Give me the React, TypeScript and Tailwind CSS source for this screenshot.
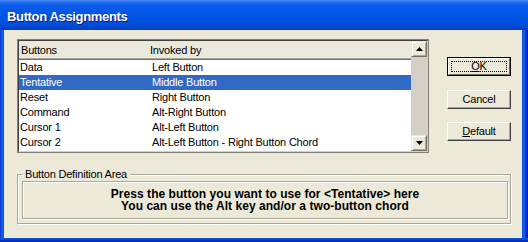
const rows = [
  ["Data", "Left Button"],
  ["Tentative", "Middle Button"],
  ["Reset", "Right Button"],
  ["Command", "Alt-Right Button"],
  ["Cursor 1", "Alt-Left Button"],
  ["Cursor 2", "Alt-Left Button - Right Button Chord"],
];

function Arrow({ up }: { up?: boolean }) {
  return (
    <svg width="7" height="4" viewBox="0 0 7 4">
      {up ? <polygon points="3.5,0 7,4 0,4" fill="#000" /> : <polygon points="0,0 7,0 3.5,4" fill="#000" />}
    </svg>
  );
}

function ScrollButton({ up }: { up?: boolean }) {
  return (
    <div className="flex h-[16px] items-center justify-center border border-t-[#ece9d8] border-l-[#ece9d8] border-r-[#716f64] border-b-[#716f64] bg-[#ece9d8] shadow-[inset_1px_1px_0_#fff,inset_-1px_-1px_0_#aca899]">
      <Arrow up={up} />
    </div>
  );
}

function DlgButton({
  children,
  isDefault,
  className = "",
}: {
  children: React.ReactNode;
  isDefault?: boolean;
  className?: string;
}) {
  if (isDefault) {
    return (
      <div className={`h-[19px] border border-black ${className}`}>
        <div className="flex h-full items-center justify-center border border-t-white border-l-white border-r-[#716f64] border-b-[#716f64] bg-[#ece9d8] p-[2px]">
          <div className="flex h-full w-full items-center justify-center border border-dotted border-black">
            {children}
          </div>
        </div>
      </div>
    );
  }
  return (
    <div
      className={`flex h-[19px] items-center justify-center border border-t-white border-l-white border-r-[#404040] border-b-[#404040] bg-[#ece9d8] shadow-[inset_-1px_-1px_0_#aca899] ${className}`}
    >
      {children}
    </div>
  );
}

function ListView() {
  return (
    <div className="h-[114px] w-[412px] border border-[#828177]">
      <div className="flex h-full border border-t-[#404040] border-l-[#404040] border-r-[#d4d0c8] border-b-[#d4d0c8]">
        <div className="flex w-[392px] flex-col bg-white">
          <div className="flex h-[19px] items-center border-b border-[#716f64] bg-[#ebe9dd] shadow-[inset_0_-1px_0_#aca899]">
            <div className="w-[129px] pl-[2px]">Buttons</div>
            <div className="pl-[2px]">Invoked by</div>
          </div>
          {rows.map(([name, by]) => (
            <div
              key={name}
              className={`flex h-[15px] items-center leading-[15px] ${
                name === "Tentative" ? "bg-[#316ac5] text-white" : ""
              }`}
            >
              <div className="w-[132px] pl-[1px]">{name}</div>
              <div className="pl-[1px] whitespace-nowrap">{by}</div>
            </div>
          ))}
        </div>
        <div className="flex w-[16px] flex-col">
          <ScrollButton up />
          <div className="flex-1 bg-[#d4d0c8]" />
          <ScrollButton />
        </div>
      </div>
    </div>
  );
}

export default function App() {
  return (
    <div className="flex h-[242px] w-[528px] flex-col bg-[#0a45d8] font-['Liberation_Sans',Arial,sans-serif] text-[11px] tracking-[-0.2px] text-black">
      <div className="flex h-[30px] shrink-0 items-center bg-[linear-gradient(to_bottom,#4a8cf6_0px,#2a72ef_2px,#0a5ceb_5px,#0056e6_14px,#0053e2_20px,#0049d4_26px,#0040c4_30px)] pl-[7px] pt-[4px]">
        <span className="text-[13px] font-bold tracking-[-0.35px] text-white [text-shadow:1px_1px_0_#0a1883]">
          Button Assignments
        </span>
      </div>
      <div className="flex flex-1">
        <div className="w-[4px] bg-[linear-gradient(to_right,#0831d9,#1a60e8,#0855dd)]" />
        <div className="flex flex-1 flex-col bg-[#ece9d8] pl-[13px] pr-[11px] pt-[9px]">
          <div className="flex">
            <ListView />
            <div className="ml-[18px] flex w-[64px] flex-col pt-[18px]">
              <DlgButton isDefault>
                <span>
                  <span className="underline">O</span>K
                </span>
              </DlgButton>
              <DlgButton className="mt-[14px]">Cancel</DlgButton>
              <DlgButton className="mt-[13px]">
                <span>
                  <span className="underline">D</span>efault
                </span>
              </DlgButton>
            </div>
          </div>
          <div className="relative mt-[21px] h-[50px] w-[494px] border border-[#aca899] shadow-[inset_1px_1px_0_#fff,1px_1px_0_#fff]">
            <span className="absolute left-[5px] top-[-7px] bg-[#ece9d8] pl-[2px] pr-[3px] leading-[13px]">
              Button Definition Area
            </span>
            <div className="ml-[4px] mt-[6px] flex h-[38px] w-[486px] flex-col items-center justify-center border border-[#aca899] text-[12px] font-bold leading-[12.5px] tracking-[0.05px] shadow-[inset_1px_1px_0_#fff,1px_1px_0_#fff]">
              <div>Press the button you want to use for &lt;Tentative&gt; here</div>
              <div>You can use the Alt key and/or a two-button chord</div>
            </div>
          </div>
        </div>
        <div className="w-[6px] bg-[linear-gradient(to_right,#0855dd,#1a60e8,#0831d9,#001ea0)]" />
      </div>
      <div className="h-[4px] shrink-0 bg-[linear-gradient(to_bottom,#0855dd,#0a3ed0,#001ea0)]" />
    </div>
  );
}
